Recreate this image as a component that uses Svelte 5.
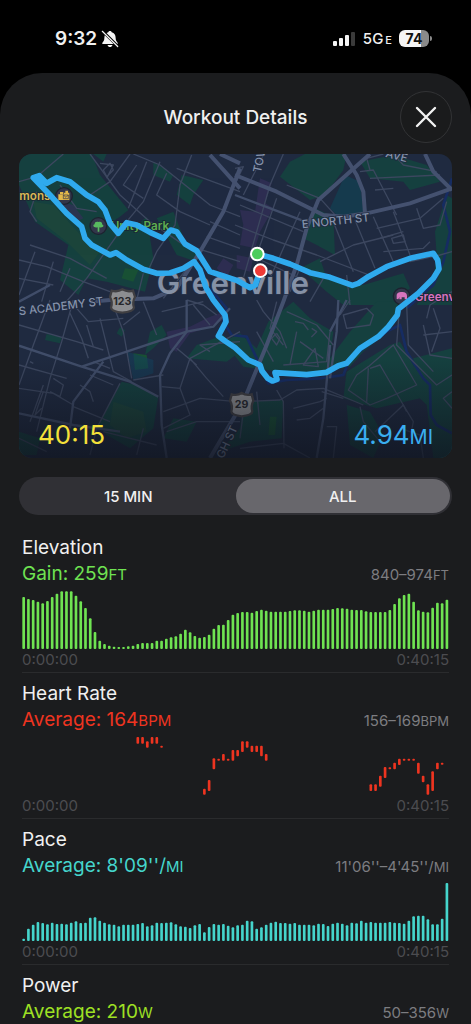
<script lang="ts">
    type Bar = [slot: number, top: number, bottom: number];

    type Metric = {
        name: string;
        color: string;
        label: string;
        value: string;
        unit: string;
        range: string;
        bars: Bar[];
    };

    const SLOT = 14.3;
    const PLOT_HEIGHT = 174;

    // one bar per slot, standing on the baseline
    function columns(heights: number[]): Bar[] {
        return heights.map((h, i) => [i, PLOT_HEIGHT - h, PLOT_HEIGHT]);
    }

    const elevation = [
        156, 150, 147, 142, 137, 144, 156, 166, 173, 173, 173, 160, 143, 123, 92,
        51, 25, 15, 10, 7, 6, 6, 8, 10, 15, 18, 18, 18, 25, 25,
        31, 35, 38, 46, 58, 50, 39, 34, 36, 43, 61, 72, 73, 87, 103,
        108, 111, 111, 109, 114, 118, 115, 112, 112, 112, 112, 114, 116, 116, 115,
        112, 115, 118, 118, 118, 120, 123, 122, 121, 118, 117, 117, 113, 111, 111,
        111, 111, 117, 135, 152, 162, 166, 142, 116, 112, 110, 124, 139, 137, 148
    ];

    const pace = [
        7, 37, 49, 57, 54, 50, 55, 51, 52, 50, 55, 59, 54, 55, 70,
        71, 61, 55, 50, 49, 44, 49, 49, 49, 51, 54, 44, 47, 55, 54,
        55, 56, 50, 44, 43, 39, 47, 51, 26, 42, 51, 49, 51, 46, 41,
        47, 49, 61, 59, 37, 41, 49, 55, 58, 54, 54, 52, 54, 49, 49,
        49, 47, 52, 51, 45, 52, 55, 52, 47, 55, 53, 61, 55, 57, 55,
        55, 55, 57, 55, 54, 52, 61, 74, 76, 76, 65, 50, 50, 67, 174
    ];

    const heartRate: Bar[] = [
        [24, 0, 20], [25, 0, 20], [26, 13, 32], [27, 0, 20], [28, 0, 20], [29, 26, 32],
        [38, 155, 173], [39, 129, 162], [40, 64, 97], [41, 65, 71], [42, 51, 71], [43, 65, 71],
        [44, 39, 71], [45, 39, 58], [46, 13, 45], [47, 13, 32], [48, 26, 45], [49, 26, 45],
        [50, 26, 58], [51, 51, 71], [73, 142, 162], [74, 142, 162], [75, 116, 149], [76, 90, 123],
        [77, 91, 97], [78, 77, 97], [79, 65, 84], [80, 65, 71], [81, 65, 71], [82, 65, 71],
        [83, 77, 110], [84, 116, 136], [85, 142, 173], [86, 103, 162], [87, 77, 97], [88, 77, 83]
    ];

    const metrics: Metric[] = [
        { name: 'Elevation', color: '#6fe352', label: 'Gain', value: '259', unit: 'FT', range: '840–974', bars: columns(elevation) },
        { name: 'Heart Rate', color: '#ee3420', label: 'Average', value: '164', unit: 'BPM', range: '156–169', bars: heartRate },
        { name: 'Pace', color: '#45d5cc', label: 'Average', value: "8'09''/", unit: 'MI', range: "11'06''–4'45''/", bars: columns(pace) },
        { name: 'Power', color: '#9ee024', label: 'Average', value: '210', unit: 'W', range: '50–356', bars: [] }
    ];

    const spans = ['15 MIN', 'ALL'];
    let span = $state('ALL');
</script>

<div class="phone">
    <div class="status">
        <div class="status-left">
            <span class="clock">9:32</span>
            <svg width="18" height="18" viewBox="0 0 18 18" aria-hidden="true">
                <path fill="#f4f4f4" d="M9 1c-1 0-1.700.7-1.700 1.300C4.600 3.100 3.400 5.200 3.400 7.500 3.400 10.500 2.400 11.500 1.400 12.800c-.4.600 0 1.300.7 1.300h13.800c.7 0 1.100-.7.7-1.300C15.600 11.500 14.600 10.500 14.600 7.500c0-2.300-1.200-4.400-3.900-5.200C10.700 1.700 10 1 9 1zM6.500 15c.3 1.300 1.300 2.100 2.500 2.100s2.200-.8 2.500-2.100z" />
                <path stroke="#000" stroke-width="2.800" d="M1.500 1 16.800 16.300" />
                <path stroke="#f4f4f4" stroke-width="1.200" stroke-linecap="round" d="M1.300 1.300 16.700 16.500" />
            </svg>
        </div>
        <div class="status-right">
            <svg width="24" height="16" viewBox="0 0 24 16" aria-hidden="true">
                <g fill="#f4f4f4">
                    <rect x="1" y="10" width="4" height="5" rx="1" />
                    <rect x="7" y="7" width="4" height="8" rx="1" />
                    <rect x="13" y="4" width="4" height="11" rx="1" />
                </g>
                <rect x="19" y="1" width="4" height="14" rx="1" fill="#3a3a3a" />
            </svg>
            <span class="network">5G<small>E</small></span>
            <span class="battery">74</span>
        </div>
    </div>

    <main class="sheet">
        <header>
            <h1>Workout Details</h1>
            <button class="close" aria-label="Close">
                <svg width="22" height="22" viewBox="0 0 22 22" aria-hidden="true">
                    <path d="M2 2 20 20M20 2 2 20" stroke="#f2f2f2" stroke-width="2.400" stroke-linecap="round" />
                </svg>
            </button>
        </header>

        <div class="map">
            <svg viewBox="27 27 1299 912" preserveAspectRatio="xMidYMid slice" role="img" aria-label="Route map of Greenville">
                <defs>
                    <linearGradient id="shade" x1="0" y1="0" x2="0" y2="1">
                        <stop offset="0" stop-color="#10141f" stop-opacity="0" />
                        <stop offset="1" stop-color="#10141f" stop-opacity="0.75" />
                    </linearGradient>
                </defs>
                <rect x="27" y="27" width="1299" height="912" fill="#1f2a40" />

                <g fill="#15403f">
                    <!-- northwest -->
                    <path d="M27 27H245L270 90 355 195 330 215 300 235 380 240 410 215 430 340 405 440 290 410 230 400 205 450 150 405 175 300 75 230 60 195 27 120Z" />
                    <path d="M430 50 490 90 480 110 430 90ZM515 90 580 105 550 150 540 180 500 150ZM250 27 290 27 280 50Z" />
                    <path d="M440 220 490 200 530 300 570 330 560 350 500 330Z" />
                    <!-- northeast -->
                    <path d="M885 27H1010L1000 75 945 150 900 165 810 95 840 50Z" />
                    <path d="M1050 50 1150 30 1250 60 1290 110 1200 135 1180 110 1080 100Z" />
                    <path d="M915 190 970 215 975 330 920 300 880 280Z" />
                    <path d="M1310 150 1326 160V480H1220L1270 400 1280 330 1275 260Z" />
                    <path d="M870 370 930 340 950 400 1060 420 1180 385 1200 430 1140 480 1000 480 950 440Z" />
                    <!-- southeast -->
                    <path d="M1326 465H1180L1140 555 1060 620 1020 665 880 690 700 665 640 590 690 565 740 610 775 530 850 470 900 520 970 560 960 640 1020 560 1100 470Z" />
                    <path d="M1140 600 1170 590 1210 660 1230 760 1100 790 1000 760 1010 680Z" />
                    <path d="M1210 640 1326 610V939H1270L1250 780 1210 740Z" />
                    <path d="M1010 780 1080 800 1120 870 1090 939 1020 900Z" />
                    <path d="M700 770 820 765 815 880 720 890 630 920 690 850Z" />
                    <!-- southwest -->
                    <path d="M335 710 380 720 445 755 430 850 360 910 290 870 265 840Z" />
                    <path d="M110 567 155 577 150 595 105 585ZM330 547 345 555 335 575 320 565ZM420 560 455 540 470 570 430 610 405 630Z" />
                    <path d="M560 600 640 570 690 620 650 650 530 640Z" />
                    <path d="M490 820 560 830 530 890 460 880ZM27 860 90 880 80 930 27 930Z" />
                </g>
                <g fill="#1c453b">
                    <path d="M70 170 130 180 230 290 270 320 240 360 170 290 80 220Z" />
                    <path d="M310 770 400 800 410 860 350 880 300 840Z" />
                </g>
                <path d="M345 370 385 375 370 410 335 400ZM370 625 410 630 415 670 375 675ZM780 815 800 815 795 870 775 870Z" fill="#185034" />
                <path d="M352 620 430 645 430 685 370 705Z" fill="#14405a" opacity=".6" />
                <path d="M1005 90 1050 110 1060 200 985 215 960 190Z" fill="#153a4d" />
                <g fill="#342f59" opacity=".7">
                    <path d="M750 100 785 115 765 175 790 190 750 260 735 310 690 300 700 240 690 195 735 200Z" />
                    <path d="M470 560 540 545 590 520 640 500 650 520 590 550 540 565 500 620 480 610Z" />
                    <path d="M680 330 730 340 720 380 680 370ZM640 340 670 360 650 395 620 370ZM150 170 190 180 220 220 200 230Z" />
                </g>

                <!-- river -->
                <g class="river">
                    <path d="M600 430 650 490 640 530 665 570 710 575 740 640 775 715 830 705 930 700 1000 690 1020 640 1130 560 1170 540 1190 620 1240 700 1260 720 1262 810 1280 840 1326 865" />
                    <path d="M1326 100 1300 180 1320 260 1300 350 1270 420 1190 490" />
                </g>

                <g class="streets">
                    <!-- northwest -->
                    <path d="M27 110 80 95 160 27M240 27 330 150 420 230 550 320M370 27 450 60 600 180 690 215" />
                    <path d="M360 27 300 110 240 150M380 60 340 120 400 160M410 50 355 190M450 50 400 170 350 230 230 400 160 480" />
                    <path d="M545 30 510 120 495 240 440 320 415 375M500 70 690 140M470 85 440 150 510 200 600 240" />
                    <path d="M27 345 110 365 220 410 300 440M60 300 180 340 290 400M130 350 95 470M180 370 150 440M27 400 130 420M75 320 27 450" />
                    <path d="M270 55 310 60 290 100M280 75 300 55 310 75 290 95ZM150 120 200 190 260 200M80 140 60 200 80 230" />
                    <path d="M560 310 690 350M590 275 690 310M600 230 690 270M555 340 460 460M400 385 380 465" />
                    <!-- northeast -->
                    <path d="M675 70 700 65 640 190M820 27 780 120 740 260 700 400M760 30 700 150M675 240 790 285 920 330 1090 395" />
                    <path d="M830 120 930 160 980 215M870 200 820 310 780 400M800 160 740 330M690 180 880 260M720 330 870 400" />
                    <path d="M970 230 1030 380M1035 225 1095 370M1090 215 1150 350M1150 200 1200 330M1050 80 1090 75 1160 210" />
                    <path d="M1080 100 1290 90M1095 135 1150 130M1100 250 1230 220 1300 160M1110 280 1180 260M1120 320 1240 310 1260 290" />
                    <path d="M1220 190 1240 250 1290 240 1310 170M1145 280 1180 270 1185 290 1150 295ZM930 350 1030 300 1150 270M1200 350 1290 330 1326 320" />
                    <path d="M1080 75 1070 40 1120 27M1150 27 1180 60 1280 80M940 400 900 470M1010 390 1020 480M870 370 840 440" />
                    <!-- southeast -->
                    <path d="M740 465 760 500 810 560 830 610M800 470 780 550 820 600M740 560 790 650M830 500 920 540 970 600M860 560 840 660" />
                    <path d="M870 590 940 640M880 660 915 610 925 665ZM905 550 920 560 905 575 920 560M855 530 880 535 895 555" />
                    <path d="M800 565 810 580 800 600 785 580 800 565M1000 510 1070 490 1090 510 1080 540 1010 550ZM1020 465 990 510" />
                    <path d="M1075 665 1150 600 1220 720 1130 760 1080 780 1015 735 1040 690ZM1080 670 1110 660 1180 780 1190 800M1075 670 1070 770" />
                    <path d="M1250 520 1260 480 1326 440M1240 540 1260 630 1326 640M1240 570 1326 560M1270 490 1290 550 1265 620" />
                    <path d="M1170 465 1160 600 1250 690 1280 720 1326 690M1190 480 1195 600 1270 680M1326 740 1300 760 1326 790" />
                    <path d="M690 770 810 765 860 735 940 730 1060 780M850 790 930 770 950 760M860 825 900 820 940 790M800 735 820 770 822 910" />
                    <path d="M690 910 820 895 900 939M935 740 1000 760M950 845 980 845 970 939M1050 785 1060 830 1110 890M1095 860 1180 780 1210 830 1200 880" />
                    <path d="M740 740 750 840M700 800 690 880M820 660 950 650 960 560M1170 850 1230 870 1240 939" />
                    <!-- southwest -->
                    <path d="M120 465 70 600 27 720M190 465 155 590 120 700 80 860M27 540 200 590 280 615M180 505 215 580 235 640" />
                    <path d="M200 490 235 530 340 520M230 540 250 605M270 520 310 680 365 710M310 480 340 560 365 700M400 470 440 570" />
                    <path d="M390 500 340 540M27 660 170 700M27 730 130 745 190 780M100 720 60 830M130 700 160 720 150 755 120 740" />
                    <path d="M100 740 85 780 75 810 95 790M210 720 240 740 250 770M190 785 300 830M240 690 310 720M250 650 300 670M60 650 70 655" />
                    <path d="M330 715 260 850 240 930M370 705 460 690M455 725 510 730 540 640 690 560M540 640 590 700 640 755M500 610 560 660" />
                    <path d="M510 730 540 810 460 850M460 800 570 760 680 770M470 860 560 830 690 830M400 850 380 930M280 860 440 900M27 880 110 920" />
                    <path d="M600 620 570 600 690 590M620 510 580 480 530 465M455 500 580 470M550 480 600 540" />
                </g>
                <g class="avenues">
                    <path d="M27 602 215 665 360 710 445 755M215 665 530 560 610 545 660 490M27 805 190 840 330 860" />
                    <path d="M530 465 530 560 480 625 450 690 455 840 470 939M280 650 190 770 180 850M675 150 860 220 900 235" />
                    <path d="M27 470 120 420M960 600 940 820 920 939M985 465 980 560 960 700M1010 465 960 560" />
                </g>
                <g class="highways">
                    <path d="M690 70 640 200 570 320 500 430 430 460 300 465 240 470" />
                    <path d="M675 90 800 140 940 210 1000 215 1070 205 1200 175 1326 130M600 30 690 130M630 27 690 55" />
                    <path d="M1080 27 1020 80 925 165 890 250 860 360 820 470 770 600 700 770 600 939" />
                    <path d="M1000 27 1040 90 1060 140 1065 205M1245 27 1270 80 1326 135" />
                </g>

                <g class="road-names">
                    <text transform="translate(28 511) rotate(-7)">S ACADEMY ST</text>
                    <text transform="translate(877 250) rotate(-6)">E NORTH ST</text>
                    <text transform="translate(752 85) rotate(-78)">TOW</text>
                    <text transform="translate(1125 35) rotate(15)">AVE</text>
                    <text transform="translate(640 943) rotate(-65)">GH ST</text>
                </g>

                <text class="city" x="440" y="447">Greenville</text>

                <g class="poi">
                    <text x="28" y="166" fill="#d8b854">mons</text>
                    <text x="302" y="256" fill="#5fae50">Unity Park</text>
                    <text x="1214" y="467" fill="#d774bd">Greenv</text>
                    <circle cx="162" cy="153" r="25" />
                    <path fill="#e2b84a" d="M145 148H162V143H178V165H145ZM150 141H160V147H150ZM166 137H174V143H166Z" />
                    <path fill="none" stroke="#32364a" stroke-width="2" d="M160 150H175V161H160ZM160 150 168 157 175 150" />
                    <circle cx="265" cy="243" r="25" />
                    <path fill="#58b85f" d="M263 247C249 250 247 239 254 238 253 229 262 229 266 231 273 228 278 234 276 238 284 241 280 250 268 247V260H263Z" />
                    <circle cx="1175" cy="454" r="25" />
                    <path fill="#d774bd" d="M1160 462V449Q1163 440 1175 441 1190 440 1191 452V463H1184V457H1175V463H1168V455L1165 463Z" />
                </g>

                <g class="shields">
                    <path d="M305 437Q323 442 337 433 352 442 369 437L375 456Q366 472 372 488 370 500 337 503 305 500 303 488 309 472 300 456Z" />
                    <text x="337" y="479">123</text>
                    <path d="M665 748Q682 753 695 744 709 753 725 748L730 767Q722 783 727 799 727 811 695 814 664 811 664 799 669 783 660 767Z" />
                    <text x="695" y="790">29</text>
                </g>

                <rect x="27" y="640" width="1299" height="299" fill="url(#shade)" />

                <path
                    class="route"
                    d="M742 327 790 340 840 357 900 383 960 397 1027 421 1045 415 1075 395 1130 365 1200 340 1270 325 1283 345 1287 372 1270 400 1225 445 1165 492 1162 510 1135 545 1105 575 1050 610 1010 655 985 662 950 682 890 689 795 683 801 703 787 708 773 700 756 678 750 660 715 645 675 608 645 588 625 573 648 530 645 510 610 465 588 428 570 375 552 350 520 370 480 384 440 385 400 373 350 345 318 323 300 330 245 300 225 280 215 245 170 205 120 150 70 98 88 92 110 115 140 98 180 110 230 150 265 170 285 195 300 235 325 265 350 233 380 240 420 262 460 280 482 255 500 260 525 297 560 317 600 380 640 393 680 406 720 428 736 420 750 377"
                />
                <circle class="pin" cx="742" cy="327" r="19" fill="#4ccc5c" />
                <circle class="pin" cx="751" cy="377" r="19" fill="#ef3a36" />
            </svg>
            <div class="totals">
                <span class="time">40:15</span>
                <span class="distance">4.94<small>MI</small></span>
            </div>
        </div>

        <div class="segments">
            {#each spans as s}
                <button class:active={span === s} aria-pressed={span === s} onclick={() => (span = s)}>{s}</button>
            {/each}
        </div>

        {#each metrics as m}
            <section>
                <h2>{m.name}</h2>
                <div class="summary">
                    <span class="value" style:color={m.color}>{m.label}: {m.value}<small>{m.unit}</small></span>
                    <span class="range">{m.range}<small>{m.unit}</small></span>
                </div>
                {#if m.bars.length}
                    <svg class="plot" viewBox="0 0 1284 174" preserveAspectRatio="none" fill={m.color} aria-hidden="true">
                        {#each m.bars as [slot, top, bottom]}
                            <rect x={slot * SLOT + 1} y={top} width="8" height={bottom - top} rx="3" />
                        {/each}
                    </svg>
                    <div class="axis">
                        <span>0:00:00</span>
                        <span>0:40:15</span>
                    </div>
                {/if}
            </section>
        {/each}
    </main>
</div>

<style>
    :global(body) {
        background: #000;
    }

    .phone {
        height: 100vh;
        overflow: hidden;
        display: flex;
        flex-direction: column;
        background: #000;
        color: #f0f0f0;
        font-family: Inter, 'Liberation Sans', sans-serif;
    }

    button {
        border: none;
        padding: 0;
        color: inherit;
        font-family: inherit;
        cursor: pointer;
    }

    .status {
        flex: none;
        height: 73px;
        box-sizing: border-box;
        padding: 4px 42px 0 55px;
        display: flex;
        align-items: center;
        justify-content: space-between;
    }

    .status-left,
    .status-right {
        display: flex;
        align-items: center;
    }

    .status-left {
        gap: 4px;
    }

    .status-right {
        gap: 7px;
    }

    .clock {
        font-size: 19px;
        font-weight: 600;
    }

    .network {
        font-size: 15px;
        font-weight: 500;
    }

    .network small {
        font-size: 11px;
        margin-left: 2px;
    }

    .battery {
        position: relative;
        width: 30px;
        height: 17px;
        border-radius: 6px;
        background: linear-gradient(90deg, #f4f4f4 74%, #8a8a8a 74%);
        color: #111;
        font-size: 14px;
        font-weight: 700;
        line-height: 17px;
        text-align: center;
    }

    .battery::after {
        content: '';
        position: absolute;
        right: -3px;
        top: 6px;
        width: 2px;
        height: 5px;
        border-radius: 0 2px 2px 0;
        background: #8a8a8a;
    }

    .sheet {
        flex: 1;
        padding: 18px 19px 0;
        border-radius: 42px 42px 0 0;
        background: #1b1c1e;
    }

    header {
        display: grid;
        grid-template-columns: 52px 1fr 52px;
        align-items: center;
        margin-bottom: 11px;
    }

    h1 {
        grid-column: 2;
        margin: 0;
        font-size: 19px;
        font-weight: 500;
        text-align: center;
    }

    .close {
        width: 52px;
        height: 52px;
        box-sizing: border-box;
        display: grid;
        place-items: center;
        border: 1px solid #323335;
        border-radius: 50%;
        background: #1a1b1c;
    }

    .map {
        display: grid;
        border-radius: 13px;
        overflow: hidden;
    }

    .map > * {
        grid-area: 1 / 1;
    }

    .map svg {
        display: block;
        width: 100%;
    }

    .streets,
    .avenues,
    .highways,
    .river,
    .route {
        fill: none;
        stroke-linejoin: round;
    }

    .streets {
        stroke: #3c475f;
        stroke-width: 4px;
    }

    .avenues {
        stroke: #404d69;
        stroke-width: 7px;
    }

    .highways {
        stroke: #44516f;
        stroke-width: 12px;
    }

    .river {
        stroke: #162c62;
        stroke-width: 8px;
    }

    .route {
        stroke: #2faaee;
        stroke-width: 17px;
        stroke-linecap: round;
    }

    .pin {
        stroke: #fff;
        stroke-width: 6px;
    }

    .road-names {
        fill: #8592ab;
        stroke: #1f2a40;
        stroke-width: 5px;
        paint-order: stroke;
        font-size: 34px;
        font-weight: 500;
    }

    .city {
        fill: #8591a6;
        stroke: #28334a;
        stroke-width: 4px;
        paint-order: stroke;
        font-size: 94px;
        font-weight: 600;
    }

    .poi text {
        stroke: #1b2534;
        stroke-width: 5px;
        paint-order: stroke;
        font-size: 35px;
        font-weight: 600;
    }

    .poi circle {
        fill: #32364a;
        stroke: #1d2230;
        stroke-width: 4px;
    }

    .shields path {
        fill: #8c8d90;
        stroke: #403f42;
        stroke-width: 7px;
    }

    .shields text {
        fill: #26272b;
        font-size: 32px;
        font-weight: 700;
        text-anchor: middle;
    }

    .totals {
        z-index: 1;
        align-self: end;
        display: flex;
        justify-content: space-between;
        padding: 0 19px 5px;
        font-size: 26px;
        line-height: 32px;
        font-weight: 400;
    }

    .totals small {
        font-size: 20px;
    }

    .time {
        color: #f4e03a;
    }

    .distance {
        color: #3aaef0;
    }

    .segments {
        display: grid;
        grid-template-columns: 1fr 1fr;
        height: 38px;
        box-sizing: border-box;
        margin: 19px 0 12px;
        padding: 2px;
        border-radius: 19px;
        background: #303035;
    }

    .segments button {
        border-radius: 17px;
        background: none;
        font-size: 15px;
        font-weight: 500;
    }

    .segments .active {
        background: #68676c;
    }

    section {
        height: 146px;
        box-sizing: border-box;
        margin: 0 3px;
        padding-top: 8px;
        border-bottom: 1px solid #2a2b2d;
    }

    section:last-child {
        border-bottom: none;
    }

    h2 {
        margin: 0;
        font-size: 19px;
        font-weight: 400;
        line-height: 26px;
    }

    .summary {
        display: flex;
        align-items: baseline;
        justify-content: space-between;
        line-height: 26px;
    }

    .value {
        font-size: 19px;
    }

    .value small {
        font-size: 15px;
    }

    .range {
        color: #7d7d81;
        font-size: 15px;
    }

    .range small {
        font-size: 13px;
    }

    .plot {
        display: block;
        width: 100%;
        height: 58px;
        margin-top: 3px;
    }

    .axis {
        display: flex;
        justify-content: space-between;
        color: #4c4c50;
        font-size: 15px;
        line-height: 22px;
    }
</style>
